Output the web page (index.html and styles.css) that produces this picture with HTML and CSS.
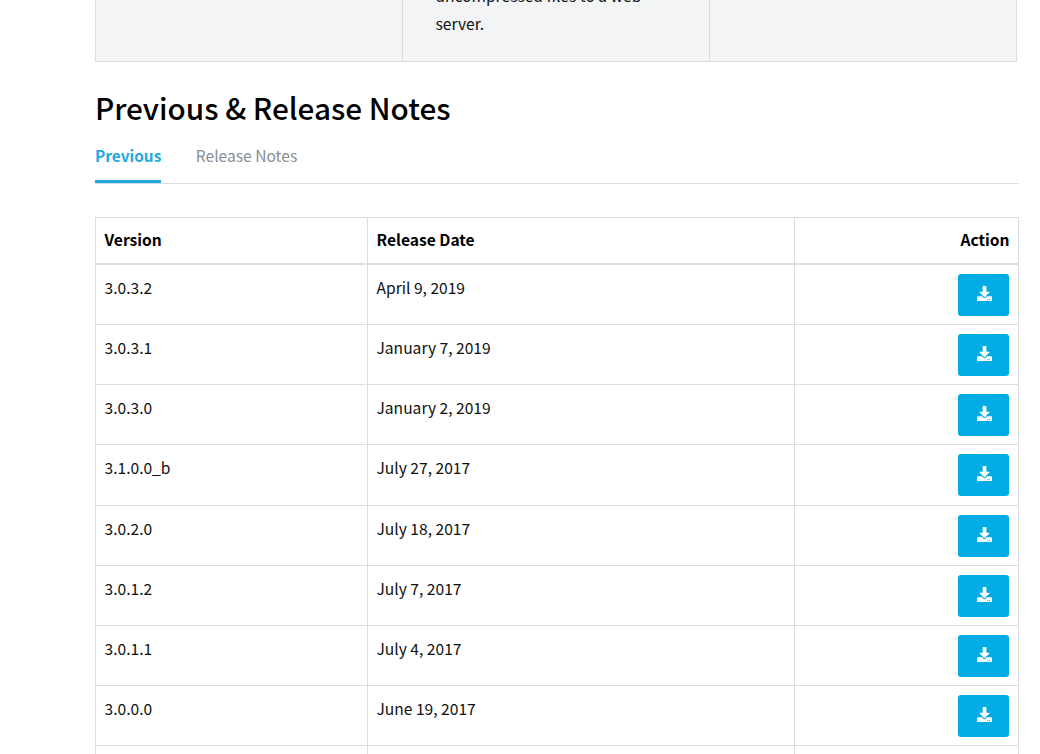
FILE: index.html
```html
<!DOCTYPE html>
<html lang="en">
<head>
<meta charset="utf-8">
<title>Previous &amp; Release Notes</title>
<link rel="stylesheet" href="styles.css">
</head>
<body>
<main class="page">
  <div class="features">
    <div class="feature"></div>
    <div class="feature feature-text">uncompressed files to a web server.</div>
    <div class="feature"></div>
  </div>
  <h2 class="title">Previous &amp; Release Notes</h2>
  <nav class="tabs">
    <a class="tab active">Previous</a>
    <a class="tab">Release Notes</a>
  </nav>
  <table class="versions">
    <colgroup><col class="c1"><col class="c2"><col class="c3"></colgroup>
    <thead>
      <tr><th>Version</th><th>Release Date</th><th class="right">Action</th></tr>
    </thead>
    <tbody>
      <tr><td>3.0.3.2</td><td>April 9, 2019</td><td class="right"><a class="dl"><svg viewBox="0 0 512 512"><use href="#dl"/></svg></a></td></tr>
      <tr><td>3.0.3.1</td><td>January 7, 2019</td><td class="right"><a class="dl"><svg viewBox="0 0 512 512"><use href="#dl"/></svg></a></td></tr>
      <tr><td>3.0.3.0</td><td>January 2, 2019</td><td class="right"><a class="dl"><svg viewBox="0 0 512 512"><use href="#dl"/></svg></a></td></tr>
      <tr><td>3.1.0.0_b</td><td>July 27, 2017</td><td class="right"><a class="dl"><svg viewBox="0 0 512 512"><use href="#dl"/></svg></a></td></tr>
      <tr><td>3.0.2.0</td><td>July 18, 2017</td><td class="right"><a class="dl"><svg viewBox="0 0 512 512"><use href="#dl"/></svg></a></td></tr>
      <tr><td>3.0.1.2</td><td>July 7, 2017</td><td class="right"><a class="dl"><svg viewBox="0 0 512 512"><use href="#dl"/></svg></a></td></tr>
      <tr><td>3.0.1.1</td><td>July 4, 2017</td><td class="right"><a class="dl"><svg viewBox="0 0 512 512"><use href="#dl"/></svg></a></td></tr>
      <tr><td>3.0.0.0</td><td>June 19, 2017</td><td class="right"><a class="dl"><svg viewBox="0 0 512 512"><use href="#dl"/></svg></a></td></tr>
      <tr><td></td><td></td><td class="right"></td></tr>
    </tbody>
  </table>
</main>
<svg class="defs" aria-hidden="true">
  <symbol id="dl" viewBox="0 0 512 512">
    <path fill="#fff" d="M216 0h80c13.300 0 24 10.700 24 24v168h87.700c17.800 0 26.700 21.500 14.100 34.100L269.700 378.300c-7.500 7.500-19.800 7.500-27.300 0L90.100 226.100c-12.600-12.600-3.700-34.100 14.100-34.100H192V24c0-13.300 10.700-24 24-24zm296 376v112c0 13.300-10.700 24-24 24H24c-13.300 0-24-10.700-24-24V376c0-13.300 10.700-24 24-24h146.700l49 49c20.100 20.100 52.500 20.100 72.600 0l49-49H488c13.300 0 24 10.700 24 24zm-124 88c0-11-9-20-20-20s-20 9-20 20 9 20 20 20 20-9 20-20zm64 0c0-11-9-20-20-20s-20 9-20 20 9 20 20 20 20-9 20-20z"/>
  </symbol>
</svg>
</body>
</html>
```
FILE: styles.css
```css
html, body {
  margin: 0;
  padding: 0;
  height: 754px;
  overflow: hidden;
  background: #fff;
}
body {
  font-family: "Noto Sans CJK SC", "Source Sans Pro", "Noto Sans", sans-serif;
  color: #111;
  font-size: 15.6px;
}
.defs { display: none; }
.page {
  width: 924px;
  margin-left: 95px;
}
.features {
  display: grid;
  grid-template-columns: 306px 307px 307px;
  width: 922px;
  height: 62px;
  box-sizing: border-box;
  background: #f3f4f6;
  border: 1px solid #dcdde0;
  border-top: 0;
}
.feature + .feature { border-left: 1px solid #dcdde0; }
.feature-text {
  box-sizing: border-box;
  height: 61px;
  padding: 0 60px 24px 32.500px;
  line-height: 28px;
  display: flex;
  align-items: flex-end;
}
.title {
  margin: 26px 0 0;
  font-size: 29.700px;
  line-height: 40px;
  font-weight: 500;
  color: #000;
}
.tabs {
  display: flex;
  gap: 34.500px;
  margin-top: 14px;
  border-bottom: 1px solid #dcdde0;
  height: 42px;
  box-sizing: border-box;
}
.tab {
  font-size: 15.6px;
  line-height: 26px;
  color: #868e96;
  height: 41px;
}
.tab.active {
  color: #1fa9dc;
  font-size: 15.4px;
  font-weight: 700;
  border-bottom: 3px solid #1fa9dc;
  height: 38px;
}
.versions {
  width: 923px;
  margin-top: 33.100px;
  border-collapse: collapse;
  table-layout: fixed;
  color: #111;
}
.c1 { width: 272px; }
.c2 { width: 427px; }
.c3 { width: 224px; }
.versions th, .versions td {
  border: 1px solid #dcdde0;
  padding: 9px 9px 8px 8.500px;
  text-align: left;
  vertical-align: top;
  line-height: 26px;
}
.versions th {
  font-weight: 700;
  color: #000;
  padding: 8px 8.500px 11px;
  border-bottom: 2px solid #dcdde0;
}
.versions tbody tr { height: 60.150px; }
.versions .right { text-align: right; }
.dl {
  display: inline-flex;
  align-items: center;
  justify-content: center;
  box-sizing: border-box;
  width: 51px;
  height: 42px;
  padding: 0 0 3px 1px;
  border-radius: 3px;
  background: #00ace6;
  vertical-align: top;
}
.dl svg {
  width: 15px;
  height: 15px;
  display: block;
}
```
